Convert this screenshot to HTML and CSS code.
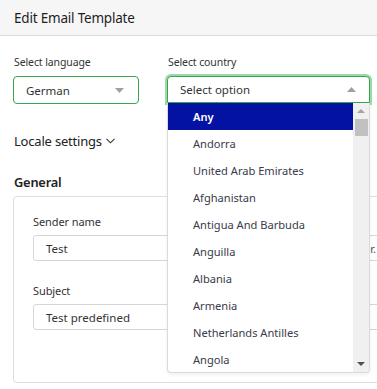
FILE: index.html
```html
<!DOCTYPE html>
<html>
<head>
<meta charset="utf-8">
<link rel="stylesheet" href="styles.css">
</head>
<body>
<div class="page">
  <div class="header">Edit Email Template</div>
  <div class="content">
    <div class="selects">
      <div class="field lang">
        <div class="label">Select language</div>
        <div class="select">
          <span>German</span>
          <svg class="caret" width="9" height="5" viewBox="0 0 9 5"><path d="M0 0H9L4.5 5Z" fill="#a0a0a0"/></svg>
        </div>
      </div>
      <div class="field country">
        <div class="label">Select country</div>
        <div class="select focus">
          <span>Select option</span>
          <svg class="caret" width="9" height="5" viewBox="0 0 9 5"><path d="M0 5H9L4.5 0Z" fill="#a0a0a0"/></svg>
        </div>
        <div class="dropdown">
          <ul class="options">
            <li class="active">Any</li>
            <li>Andorra</li>
            <li>United Arab Emirates</li>
            <li>Afghanistan</li>
            <li>Antigua And Barbuda</li>
            <li>Anguilla</li>
            <li>Albania</li>
            <li>Armenia</li>
            <li>Netherlands Antilles</li>
            <li>Angola</li>
          </ul>
          <div class="scrollbar">
            <svg class="arrow up" width="8" height="4" viewBox="0 0 8 4"><path d="M0 4H8L4 0Z" fill="#a3a3a3"/></svg>
            <div class="thumb"></div>
            <div class="spacer"></div>
            <svg class="arrow down" width="8" height="4" viewBox="0 0 8 4"><path d="M0 0H8L4 4Z" fill="#505050"/></svg>
          </div>
        </div>
      </div>
    </div>
    <div class="locale">Locale settings
      <svg width="9" height="6" viewBox="0 0 9 6"><path d="M0.5 0.8L4.5 4.8L8.5 0.8" fill="none" stroke="#333" stroke-width="1.1"/></svg>
    </div>
    <div class="section-title">General</div>
    <div class="card">
      <div class="label2">Sender name</div>
      <div class="input"><span>Test</span><span class="hint">er.</span></div>
      <div class="label2 second">Subject</div>
      <div class="input"><span>Test predefined</span></div>
    </div>
  </div>
</div>
</body>
</html>
```

FILE: styles.css
```css
html, body {
  margin: 0;
  padding: 0;
}
body {
  font-family: "Noto Sans", "Open Sans", sans-serif;
  color: #222;
  background: #fff;
  overflow: hidden;
  width: 377px;
  height: 389px;
}
.page {
  width: 377px;
  height: 389px;
  overflow: hidden;
}
.header {
  height: 35px;
  background: #f6f6f6;
  border-bottom: 1px solid #dcdcdc;
  display: flex;
  align-items: center;
  padding-left: 14px;
  font-size: 13.5px;
  color: #1e1e1e;
  letter-spacing: -0.2px;
}
.content {
  padding: 19px 0 0 13px;
}
.selects {
  display: flex;
  gap: 28px;
}
.field {
  position: relative;
}
.label {
  font-size: 10.5px;
  line-height: 14px;
  color: #333;
  padding-left: 1px;
  margin-bottom: 7px;
  letter-spacing: -0.1px;
}
.select {
  box-sizing: border-box;
  height: 28px;
  border: 1px solid #3aa64c;
  border-radius: 4px;
  display: flex;
  align-items: center;
  justify-content: space-between;
  font-size: 11.5px;
  color: #333;
  background: #fff;
}
.lang .select {
  width: 126px;
  padding: 0 14px 0 12px;
}
.country .select {
  width: 203px;
  height: 27px;
  padding: 0 13px 0 12px;
  border-radius: 4px 4px 0 0;
  box-shadow: 0 0 0 2px #9dd8aa;
}
.dropdown {
  position: absolute;
  left: 0;
  top: 48px;
  width: 203px;
  height: 270px;
  box-sizing: border-box;
  background: #fff;
  border: 1px solid #dadada;
  border-top: none;
  border-radius: 0 0 4px 4px;
  box-shadow: 0 2px 4px rgba(0,0,0,0.06);
  display: flex;
  overflow: hidden;
  z-index: 5;
}
.options {
  list-style: none;
  margin: 0;
  padding: 0;
  flex: 1;
}
.options li {
  height: 27px;
  display: flex;
  align-items: center;
  padding-left: 25px;
  font-size: 11.1px;
  color: #3a3a4a;
}
.options li.active {
  background: #0412a3;
  color: #fff;
  font-weight: 600;
}
.scrollbar {
  width: 16px;
  background: #f0f0f0;
  display: flex;
  flex-direction: column;
  align-items: center;
}
.arrow.up {
  margin-top: 6px;
}
.thumb {
  width: 13px;
  height: 17px;
  background: #c1c1c1;
  margin-top: 6px;
}
.spacer {
  flex: 1;
}
.arrow.down {
  margin-bottom: 6px;
}
.locale {
  margin-top: 28px;
  font-size: 13px;
  color: #222;
  display: flex;
  align-items: center;
  gap: 4px;
  padding-left: 1px;
  letter-spacing: -0.2px;
}
.section-title {
  margin-top: 23px;
  font-size: 12.8px;
  font-weight: 600;
  color: #222;
  padding-left: 1px;
  letter-spacing: -0.2px;
}
.card {
  margin-top: 5px;
  width: 400px;
  height: 187px;
  box-sizing: border-box;
  border: 1px solid #dedede;
  border-radius: 4px;
  padding: 18px 0 0 19px;
}
.label2 {
  font-size: 11px;
  line-height: 14px;
  color: #333;
  margin-bottom: 6px;
  letter-spacing: -0.1px;
}
.label2.second {
  margin-top: 23px;
}
.input {
  box-sizing: border-box;
  height: 26px;
  width: 360px;
  border: 1px solid #d4d6da;
  border-radius: 3px;
  display: flex;
  align-items: center;
  justify-content: space-between;
  padding: 0 16px 0 12px;
  font-size: 11.5px;
  color: #333;
}
.hint {
  color: #555;
  font-size: 11px;
}
```
